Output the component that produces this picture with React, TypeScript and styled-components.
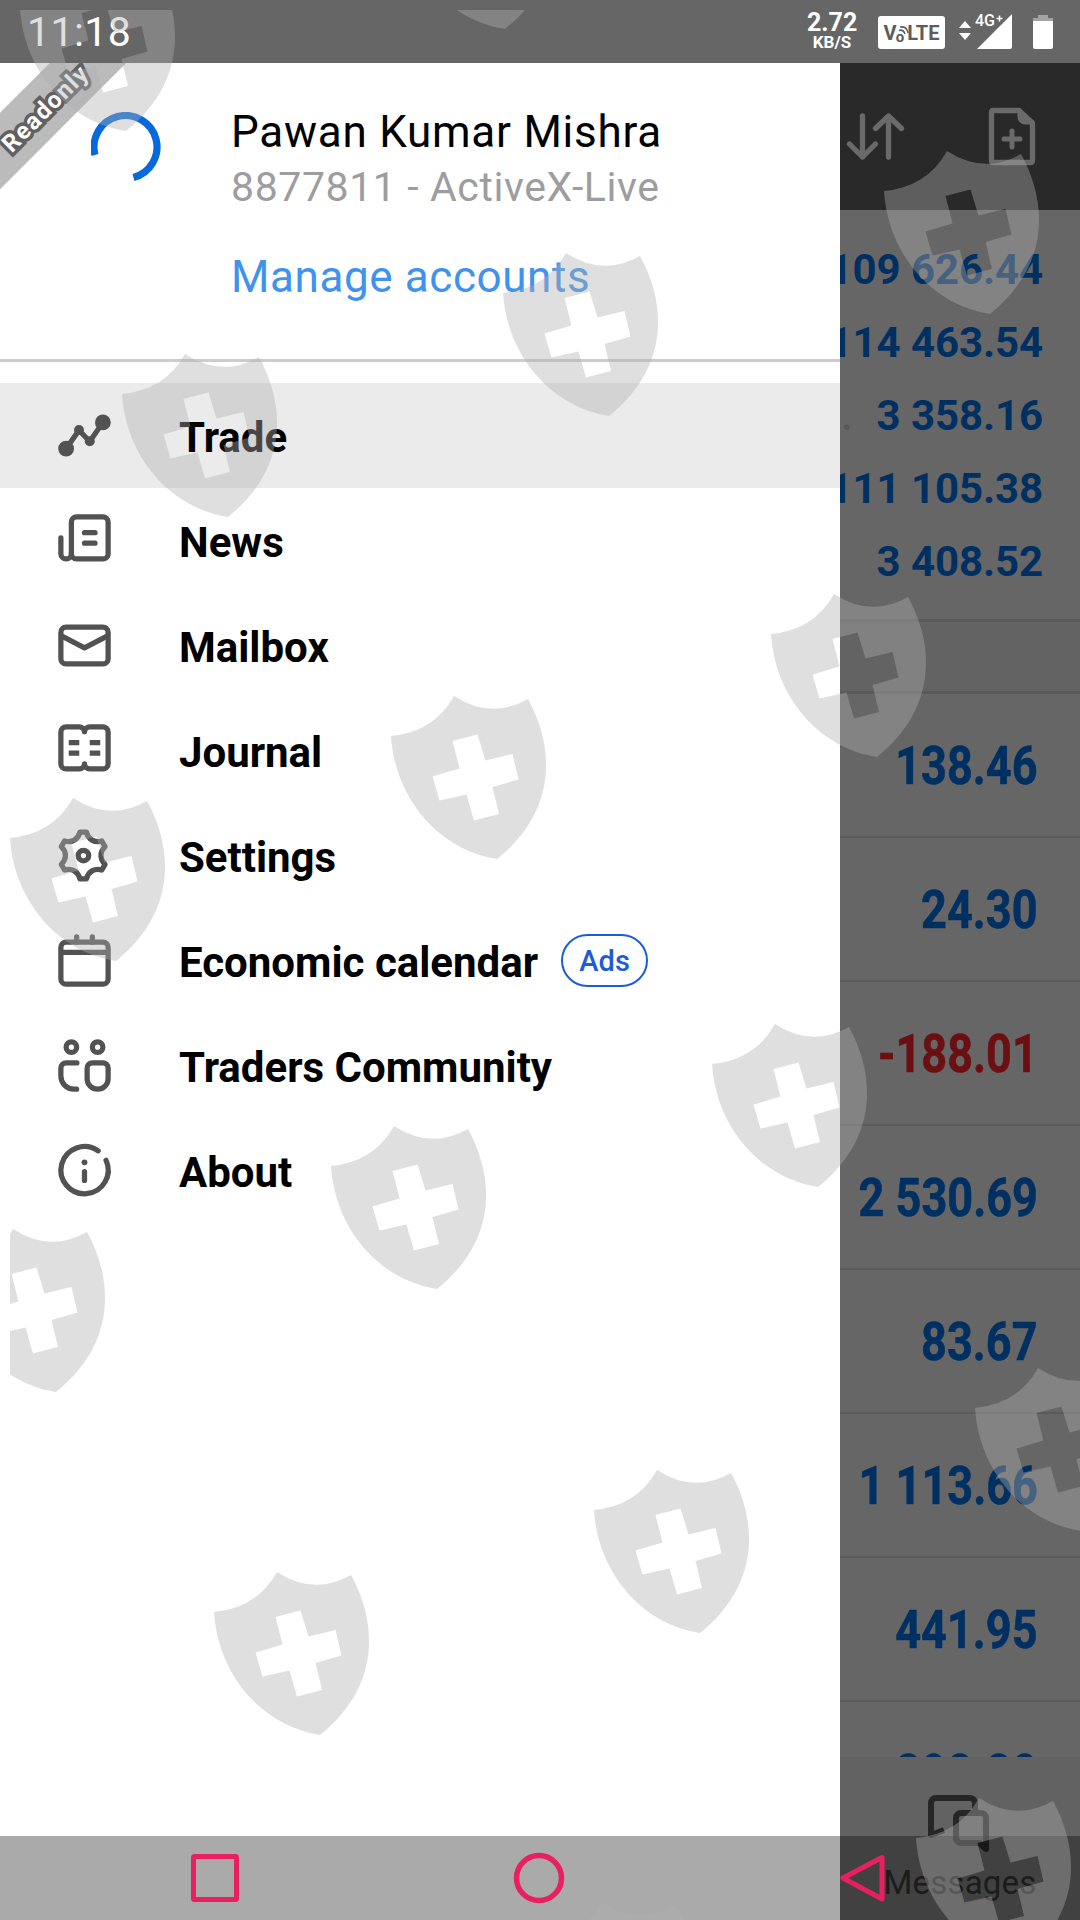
import React from 'react';
import styled, {createGlobalStyle} from 'styled-components';

const GlobalStyle = createGlobalStyle`
  * {
    box-sizing: border-box;
  }

  body {
    margin: 0;
    background-color: #666;
    font-family: Roboto, 'Noto Sans', sans-serif;
  }
`;

const Screen = styled.div`
  position: relative;
  display: flex;
  flex-direction: column;
  width: 1080px;
  height: 1920px;
  overflow: hidden;
  background-color: #666;
`;

const StatusBar = styled.header`
  flex: none;
  display: flex;
  align-items: center;
  justify-content: space-between;
  height: 63px;
  padding: 1px 27px 0 27px;
  background-color: #666;
  color: #fff;
`;

const Clock = styled.time`
  font-size: 41px;
  line-height: 63px;
  letter-spacing: 0.4px;
`;

const StatusIcons = styled.div`
  display: flex;
  align-items: center;
`;

const NetSpeed = styled.div`
  width: 50px;
  margin-right: 21px;
  font-size: 25px;
  font-weight: 700;
  line-height: 20px;
  text-align: center;
`;

const NetUnit = styled.small`
  display: block;
  font-size: 17px;
  line-height: 18px;
`;

const Volte = styled.div`
  display: flex;
  align-items: center;
  justify-content: center;
  width: 67px;
  height: 33px;
  margin-right: 14px;
  padding-top: 1px;
  border-radius: 3px;
  background-color: #fff;
  color: #5c5c5c;
  font-size: 20px;
  font-weight: 700;
`;

const VolteSmall = styled.span`
  position: relative;
  align-self: flex-end;
  margin: 0 3px 3px -1px;
  font-size: 15px;
`;

const VolteWaves = styled.svg`
  position: absolute;
  left: 2px;
  top: -3px;
`;

const Signal = styled.svg`
  margin-right: 20px;
`;

const Body = styled.div`
  flex: 1;
  display: grid;
  grid-template-columns: 840px 240px;
  min-height: 0;
`;

const Drawer = styled.aside`
  position: relative;
  overflow: hidden;
  background-color: #fff;
`;

const Ribbon = styled.div`
  position: absolute;
  left: -156px;
  top: 17px;
  width: 400px;
  height: 54px;
  background-color: #bbb;
  transform: rotate(-45deg);
`;

const RibbonText = styled.span`
  display: block;
  color: #fff;
  font-size: 24px;
  font-weight: 700;
  line-height: 58px;
  letter-spacing: 1.4px;
  text-align: center;
  -webkit-text-stroke: 7px #606063;
  paint-order: stroke fill;
`;

const Account = styled.section`
  display: flex;
  height: 299px;
  border-bottom: 3px solid #ccc;
`;

const SpinnerBox = styled.div`
  width: 231px;
  padding: 49px 0 0 91px;
`;

const AccountName = styled.h1`
  margin: 42px 0 0;
  font-size: 44px;
  font-weight: 400;
  line-height: 54px;
  letter-spacing: 0.75px;
  color: #000;
  white-space: nowrap;
`;

const AccountNumber = styled.p`
  margin: 1px 0 0;
  font-size: 41px;
  line-height: 54px;
  letter-spacing: 0.6px;
  color: #9d9da0;
  white-space: nowrap;
`;

const ManageLink = styled.a`
  display: block;
  margin-top: 36px;
  font-size: 44px;
  line-height: 54px;
  letter-spacing: 0.6px;
  color: #3f93ee;
`;

const Menu = styled.nav`
  padding-top: 21px;
`;

const MenuItem = styled.div<{ $active?: boolean }>`
  display: flex;
  align-items: center;
  height: 105px;
  padding-left: 53px;
  background-color: ${({$active}) => $active ? '#ebebeb' : 'transparent'};
`;

const MenuLabel = styled.span`
  margin-left: 63px;
  padding-top: 4px;
  font-size: 42px;
  font-weight: 700;
  line-height: 50px;
  color: #000;
`;

const Badge = styled.span`
  display: flex;
  align-items: center;
  justify-content: center;
  width: 87px;
  height: 53px;
  margin-left: 23px;
  border: 2.5px solid #1d5cd8;
  border-radius: 27px;
  font-size: 29px;
  font-weight: 500;
  color: #1d5cd8;
`;

const Dimmed = styled.main`
  display: flex;
  flex-direction: column;
  min-width: 0;
  overflow: hidden;
  background-color: #666;
`;

const Toolbar = styled.div`
  flex: none;
  display: flex;
  align-items: flex-start;
  justify-content: space-between;
  height: 147px;
  padding: 42px 44px 0 4px;
  background-color: #292929;
`;

const Summary = styled.div`
  flex: none;
  height: 412px;
  padding: 23px 37px 0 0;
  border-bottom: 3px solid #5a5a5a;
`;

const SummaryRow = styled.div`
  display: flex;
  align-items: center;
  justify-content: flex-end;
  height: 73px;
  font-size: 42px;
  font-weight: 700;
  letter-spacing: -0.1px;
  color: #003061;
  white-space: nowrap;
`;

const Leader = styled.span`
  margin: 0 auto 0 1px;
  font-weight: 500;
  color: #575757;
`;

const Band = styled.div`
  flex: none;
  height: 72px;
  border-bottom: 3px solid #5a5a5a;
  background-color: #636363;
`;

const Positions = styled.div`
  flex: 1;
  min-height: 0;
  overflow: hidden;
`;

const Position = styled.div`
  display: flex;
  align-items: center;
  justify-content: flex-end;
  height: 144px;
  padding: 1px 42px 0 0;
  border-bottom: 2px solid #5b5b5b;
`;

const Profit = styled.span<{ $loss?: boolean }>`
  font-size: 54px;
  font-weight: 700;
  color: ${({$loss}) => $loss ? '#6b0f12' : '#003061'};
  white-space: nowrap;
  -webkit-text-stroke: 0.6px;
  transform: scaleX(0.835);
  transform-origin: right center;
`;

const TabBar = styled.div`
  flex: none;
  display: flex;
  flex-direction: column;
  align-items: center;
  height: 163px;
  padding-top: 37px;
  background-color: #626262;
`;

const TabLabel = styled.span`
  margin-top: 5px;
  font-size: 33px;
  line-height: 40px;
  letter-spacing: 0.2px;
  color: #2a2a2a;
`;

const SystemNav = styled.footer`
  position: absolute;
  left: 0;
  right: 0;
  bottom: 0;
  display: flex;
  align-items: center;
  justify-content: space-between;
  height: 84px;
  padding: 0 193px 0 191px;
  background-color: rgba(0, 0, 0, 0.335);
`;

const Watermark = styled.svg`
  position: absolute;
  left: 10px;
  top: 10px;
  pointer-events: none;
`;

const icon = {
    width: 63,
    height: 63,
    viewBox: '0 0 24 24',
    fill: 'none',
    stroke: '#525252',
    strokeWidth: 2,
    strokeLinecap: 'round' as const,
    strokeLinejoin: 'round' as const
};

const TradeIcon = () => (
    <svg {...icon}>
        <path d="M5 17L9.9 10L14 14.3L19 7"/>
        <g fill="#525252" stroke="none">
            <circle cx="5" cy="17" r="3"/>
            <circle cx="9.9" cy="9.9" r="1.9"/>
            <circle cx="14" cy="14.2" r="1.9"/>
            <circle cx="19" cy="7" r="3"/>
        </g>
    </svg>
);

const NewsIcon = () => (
    <svg {...icon}>
        <rect x="7" y="3" width="14" height="16" rx="2"/>
        <path d="M3 11v6a2 2 0 0 0 4 0M12 9h4M12 13h4"/>
    </svg>
);

const MailIcon = () => (
    <svg {...icon}>
        <rect x="3" y="5" width="18" height="14" rx="2"/>
        <path d="M3.4 8.4L12 12.9L20.6 8.4"/>
    </svg>
);

const JournalIcon = () => (
    <svg {...icon}>
        <path d="M12 4.8C12 3.7 11 3 10 3H5a2 2 0 0 0-2 2v12a2 2 0 0 0 2 2h5c1 0 2-.7 2-1.8"/>
        <path d="M12 4.8C12 3.7 13 3 14 3h5a2 2 0 0 1 2 2v12a2 2 0 0 1-2 2h-5c-1 0-2-.7-2-1.8"/>
        <path strokeLinecap="butt" d="M6 9h4M6 13h4M14 9h4M14 13h4"/>
    </svg>
);

const gearPath = () => {
    const at = (deg: number, r: number) => {
        const a = deg * Math.PI / 180;
        return `${(11.5 + r * Math.cos(a)).toFixed(2)} ${(12 + r * Math.sin(a)).toFixed(2)}`;
    };
    let d = `M${at(-98, 9)}`;
    for (let i = 0; i < 6; i++) {
        const a = -90 + i * 60;
        d += `L${at(a + 8, 9)}C${at(a + 17, 6.4)} ${at(a + 43, 6.4)} ${at(a + 52, 9)}`;
    }
    return d + 'Z';
};

const SettingsIcon = () => (
    <svg {...icon}>
        <path d={gearPath()}/>
        <circle cx="11.6" cy="12" r="2"/>
    </svg>
);

const CalendarIcon = () => (
    <svg {...icon}>
        <rect x="3" y="5" width="18" height="16" rx="2"/>
        <path d="M9 3v2M15 3v2M4 8.9h16"/>
    </svg>
);

const CommunityIcon = () => (
    <svg {...icon}>
        <circle cx="7" cy="5" r="2"/>
        <circle cx="17" cy="5" r="2"/>
        <path d="M9.1 11H5a2 2 0 0 0-2 2v3a5 5 0 0 0 5 5h1"/>
        <path d="M15 11h4a2 2 0 0 1 2 2v4a4 4 0 0 1-8 0v-4a2 2 0 0 1 2-2z"/>
    </svg>
);

const AboutIcon = () => (
    <svg {...icon}>
        <path d="M17.2 4.5A9 9 0 1 0 20.2 8.1"/>
        <path d="M12 12.4v3.4"/>
        <circle cx="12" cy="8.9" r="1.1" fill="#525252" stroke="none"/>
    </svg>
);

const menu = [
    {label: 'Trade', Icon: TradeIcon, active: true},
    {label: 'News', Icon: NewsIcon},
    {label: 'Mailbox', Icon: MailIcon},
    {label: 'Journal', Icon: JournalIcon},
    {label: 'Settings', Icon: SettingsIcon},
    {label: 'Economic calendar', Icon: CalendarIcon, badge: 'Ads'},
    {label: 'Traders Community', Icon: CommunityIcon},
    {label: 'About', Icon: AboutIcon}
];

const summary = ['109 626.44', '114 463.54', '3 358.16', '111 105.38', '3 408.52'];

const profits = ['138.46', '24.30', '-188.01', '2 530.69', '83.67', '1 113.66', '441.95', '298.80'];

// top left corner of every shield on the screen
const shields = [
    [20, -32], [399, -134], [884, 151], [503, 253], [122, 354], [771, 594],
    [391, 696], [10, 798], [712, 1024], [331, 1126], [-50, 1229], [975, 1368],
    [594, 1470], [214, 1572], [916, 1798], [539, 1902]
];

const shieldPath = 'M0 40Q43 36 63 0Q100 24 137 3C164 52 166 115 106 163C48 154 4 103 0 40Z' +
    'M61.5 45L68.5 72.5L41.5 80.5L48.5 104.5L75.5 98.5L83 124.5L108 118L101.5 91L127.5 83.5L121.5 58L94.5 64.5L86.5 38.5Z';

const App: React.FC = () => (
    <>
        <GlobalStyle/>
        <Screen>
            <StatusBar>
                <Clock>11:18</Clock>
                <StatusIcons>
                    <NetSpeed>2.72<NetUnit>KB/S</NetUnit></NetSpeed>
                    <Volte>
                        V
                        <VolteSmall>
                            o
                            <VolteWaves width="11" height="11" fill="none" stroke="#5c5c5c" strokeWidth="1.6">
                                <path d="M1 5.5Q5 4 7 9M2 2Q9 1 10 8"/>
                            </VolteWaves>
                        </VolteSmall>
                        LTE
                    </Volte>
                    <Signal width="54" height="36" fill="#fff">
                        <path d="M0 14L6 7L12 14ZM0 19h12L6 26Z"/>
                        <path d="M18 35L53 0V33a2 2 0 0 1-2 2Z"/>
                        <text x="16" y="12" fontSize="16" fontWeight="500">4G</text>
                        <path d="M37.500 4.500h6M40.500 1.500v6" stroke="#fff" strokeWidth="1.6"/>
                    </Signal>
                    <svg width="20" height="36">
                        <path fill="#a3a3a3" d="M5 1h10v3h5v4H0V4h5Z"/>
                        <path fill="#fff" d="M0 7h20v26a2 2 0 0 1-2 2H2a2 2 0 0 1-2-2Z"/>
                    </svg>
                </StatusIcons>
            </StatusBar>
            <Body>
                <Drawer>
                    <Ribbon><RibbonText>Readonly</RibbonText></Ribbon>
                    <Account>
                        <SpinnerBox>
                            <svg width="71" height="71" fill="none" stroke="#0869dc" strokeWidth="7.2">
                                <path d="M4 43A31.5 31.5 0 1 1 42.5 65.5"/>
                            </svg>
                        </SpinnerBox>
                        <div>
                            <AccountName>Pawan Kumar Mishra</AccountName>
                            <AccountNumber>8877811 - ActiveX-Live</AccountNumber>
                            <ManageLink>Manage accounts</ManageLink>
                        </div>
                    </Account>
                    <Menu>
                        {menu.map(({label, Icon, active, badge}) => (
                            <MenuItem key={label} $active={active}>
                                <Icon/>
                                <MenuLabel>{label}</MenuLabel>
                                {badge && <Badge>{badge}</Badge>}
                            </MenuItem>
                        ))}
                    </Menu>
                </Drawer>
                <Dimmed>
                    <Toolbar>
                        <svg width="64" height="60" fill="none" stroke="#6a6a6a" strokeWidth="5.3" strokeLinecap="round" strokeLinejoin="round">
                            <path d="M18.5 11V52M5.5 39L18.5 52L31.5 39M44.5 52V11M31.5 23.5L44.5 11L57.5 23.5"/>
                        </svg>
                        <svg width="48" height="62" fill="none" stroke="#6a6a6a" strokeWidth="5.3" strokeLinecap="round" strokeLinejoin="round">
                            <path d="M5 5.5H31L44.5 18V56a1.5 1.5 0 0 1-1.5 1.5H5a1.5 1.5 0 0 1-1.5-1.5V7a1.5 1.5 0 0 1 1.5-1.5Z"/>
                            <path fill="#6a6a6a" strokeWidth="3" d="M31 6V12a6 6 0 0 0 6 6h7Z"/>
                            <path strokeWidth="5" d="M24 26V42M16 34H32"/>
                        </svg>
                    </Toolbar>
                    <Summary>
                        {summary.map((value, i) => (
                            <SummaryRow key={value}>
                                {i === 2 && <Leader>.</Leader>}
                                {value}
                            </SummaryRow>
                        ))}
                    </Summary>
                    <Band/>
                    <Positions>
                        {profits.map(value => (
                            <Position key={value}>
                                <Profit $loss={value.startsWith('-')}>{value}</Profit>
                            </Position>
                        ))}
                    </Positions>
                    <TabBar>
                        <svg width="66" height="64" fill="none" stroke="#262626" strokeWidth="6" strokeLinejoin="round">
                            <path d="M48 18V9a5 5 0 0 0-5-5H9a5 5 0 0 0-5 5V41L17 36"/>
                            <path d="M34 19H54a5 5 0 0 1 5 5V55L52 49H34a5 5 0 0 1-5-5V24a5 5 0 0 1 5-5Z"/>
                        </svg>
                        <TabLabel>Messages</TabLabel>
                    </TabBar>
                </Dimmed>
            </Body>
            <SystemNav>
                <svg width="48" height="52" fill="none" stroke="#e82062" strokeWidth="5">
                    <rect x="2.5" y="4.5" width="43" height="43" rx="1"/>
                </svg>
                <svg width="52" height="52" fill="none" stroke="#e82062" strokeWidth="5.5">
                    <circle cx="26" cy="26" r="22.5"/>
                </svg>
                <svg width="48" height="52" fill="none" stroke="#e82062" strokeWidth="5" strokeLinejoin="round">
                    <path d="M4 26L43 5.5V47Z"/>
                </svg>
            </SystemNav>
            <Watermark width="1070" height="1910" viewBox="10 10 1070 1910">
                {shields.map(([x, y]) => (
                    <path
                        key={`${x}:${y}`}
                        d={shieldPath}
                        transform={`translate(${x} ${y})`}
                        fill="#b0b0b0"
                        fillOpacity="0.4"
                        fillRule="evenodd"
                    />
                ))}
            </Watermark>
        </Screen>
    </>
);

export default App;
